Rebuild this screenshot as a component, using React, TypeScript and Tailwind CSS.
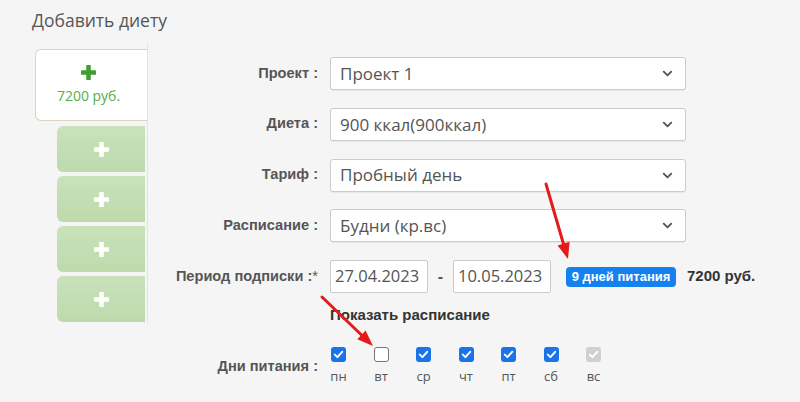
import { ChevronDown } from 'lucide-react'

const selects = [
  { label: 'Проект :', value: 'Проект 1' },
  { label: 'Диета :', value: '900 ккал(900ккал)' },
  { label: 'Тариф :', value: 'Пробный день' },
  { label: 'Расписание :', value: 'Будни (кр.вс)' },
]

const days = [
  { name: 'пн', checked: true },
  { name: 'вт', checked: false },
  { name: 'ср', checked: true },
  { name: 'чт', checked: true },
  { name: 'пт', checked: true },
  { name: 'сб', checked: true },
  { name: 'вс', checked: true, disabled: true },
]

const sans = "font-['Open_Sans','Noto_Sans',sans-serif]"
const arial = "font-['Liberation_Sans',Arial,sans-serif]"

function Plus({ color }: { color: string }) {
  return (
    <svg width="15" height="15" viewBox="0 0 15 15">
      <rect x="0" y="5.25" width="15" height="4.5" rx="0.5" fill={color} />
      <rect x="5.25" y="0" width="4.5" height="15" rx="0.5" fill={color} />
    </svg>
  )
}

function Label({ children }: { children: React.ReactNode }) {
  return (
    <div className={`w-[170px] shrink-0 mr-[12px] text-right font-bold text-[14.6px] text-[#555] ${arial}`}>
      {children}
    </div>
  )
}

function Checkbox({ checked, disabled }: { checked: boolean; disabled?: boolean }) {
  if (!checked) {
    return <div className="w-[15px] h-[15px] rounded-[3px] border border-[#767676] bg-white" />
  }
  return (
    <div
      className={`w-[15px] h-[15px] rounded-[3px] flex items-center justify-center ${
        disabled ? 'bg-[#d0d0d0]' : 'bg-[#1a73e8]'
      }`}
    >
      <svg width="11" height="11" viewBox="0 0 11 11">
        <path d="M1.8 5.6 L4.4 8.1 L9.2 2.8" fill="none" stroke="white" strokeWidth="2" strokeLinecap="round" strokeLinejoin="round" />
      </svg>
    </div>
  )
}

export default function App() {
  return (
    <div className={`relative w-[800px] h-[402px] overflow-hidden bg-[#f5f5f5] ${sans}`}>
      <div className="pt-[8px] pl-[32px] text-[17.5px] leading-[24px] text-[#555]">Добавить диету</div>

      <div className="flex mt-[12px]">
        {/* left column with diet tabs */}
        <div className="w-[148px] h-[279px] shrink-0 pl-[35px] pt-[5px] border-r border-[#e2e2e2]">
          <div className="w-[112px] h-[72px] bg-white border border-r-0 border-[#dcd3c2] rounded-l-[6px] flex flex-col items-center pt-[15px] pr-[6px]">
            <Plus color="#3d9f2e" />
            <div className="mt-[6px] text-[14px] leading-[20px] text-[#5aad45]">7200 руб.</div>
          </div>
          <div className="ml-[22px] mt-[5px] flex flex-col gap-[4px]">
            {[0, 1, 2, 3].map((i) => (
              <div
                key={i}
                className="w-[88px] h-[46px] rounded-l-[6px] bg-linear-to-b from-[#c9e2ba] to-[#bedaac] flex items-center justify-center"
              >
                <Plus color="#ffffff" />
              </div>
            ))}
          </div>
        </div>

        {/* form */}
        <div className="flex-1 pt-[13px]">
          <div className="flex flex-col gap-[17.75px]">
            {selects.map((s) => (
              <div key={s.label} className="flex items-center h-[33px]">
                <Label>{s.label}</Label>
                <div className="w-[356px] h-[33px] bg-white border border-[#cbcbcb] rounded-[3px] shadow-[0_1px_1px_rgba(0,0,0,0.06)] flex items-center justify-between pl-[9px] pr-[10px]">
                  <span className="text-[17px] text-[#555]">{s.value}</span>
                  <ChevronDown size={15} strokeWidth={3} className="text-[#555]" />
                </div>
              </div>
            ))}

            <div className="flex items-center h-[33px]">
              <Label>
                Период подписки :<span className="font-normal">*</span>
              </Label>
              <div className="w-[98px] h-[33px] bg-white border border-[#cbcbcb] rounded-[2px] flex items-center pl-[4px] text-[16.5px] text-[#555]">
                27.04.2023
              </div>
              <div className={`w-[25px] text-center text-[16px] font-bold text-[#555] ${arial}`}>-</div>
              <div className="w-[98px] h-[33px] bg-white border border-[#cbcbcb] rounded-[2px] flex items-center pl-[4px] text-[16.5px] text-[#555]">
                10.05.2023
              </div>
              <div className={`ml-[15px] h-[20px] w-[110px] rounded-[4px] bg-[#1481ee] text-white text-[13px] font-bold flex items-center justify-center ${arial}`}>
                9 дней питания
              </div>
              <div className={`ml-[11px] text-[15px] font-bold text-[#333] ${arial}`}>7200 руб.</div>
            </div>
          </div>

          <div className={`ml-[182px] mt-[13px] text-[15px] leading-[18px] font-bold text-[#333] ${arial}`}>
            Показать расписание
          </div>

          <div className="flex mt-[23px]">
            <div className="pt-[9px]">
              <Label>Дни питания :</Label>
            </div>
            <div className="flex gap-[27.5px] ml-[1px]">
              {days.map((d) => (
                <div key={d.name} className="w-[15px] flex flex-col items-center">
                  <Checkbox checked={d.checked} disabled={d.disabled} />
                  <div className="mt-[5px] text-[13px] leading-[18px] text-[#555] whitespace-nowrap">{d.name}</div>
                </div>
              ))}
            </div>
          </div>
        </div>
      </div>

      {/* annotation arrows */}
      <svg className="absolute inset-0 pointer-events-none" width="800" height="402">
        <line x1="546" y1="184" x2="563.5" y2="244" stroke="#e31b1b" strokeWidth="3" strokeLinecap="round" />
        <polygon points="568,259 569.6,241.8 557.6,245.4" fill="#e31b1b" />
        <line x1="322" y1="297" x2="361.5" y2="335" stroke="#e31b1b" strokeWidth="3" strokeLinecap="round" />
        <polygon points="373,346 365.6,330.6 357.3,339.2" fill="#e31b1b" />
      </svg>
    </div>
  )
}
